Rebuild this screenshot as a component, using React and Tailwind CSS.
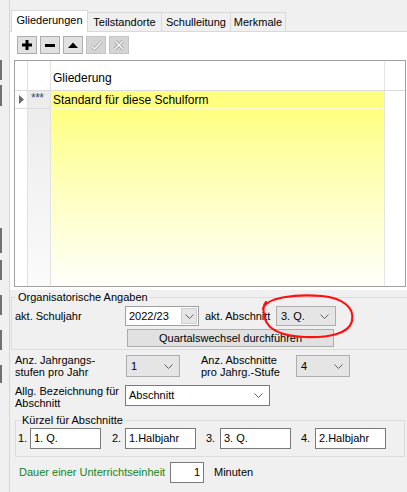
import React from 'react';

function Chevron() {
  return (
    <svg width="9" height="5" viewBox="0 0 9 5" className="shrink-0">
      <path d="M0.5 0.5L4.5 4.5L8.5 0.5" fill="none" stroke="#606060" strokeWidth="1" />
    </svg>
  );
}

function ListCombo({ value, className }) {
  return (
    <div className={`flex items-center justify-between pl-[4px] pr-[6px] bg-[#e5e5e5] border border-[#adadad] ${className}`}>
      <span>{value}</span>
      <Chevron />
    </div>
  );
}

function TextBox({ value, className }) {
  return (
    <div className={`h-[21px] flex items-center px-[3px] bg-white border border-[#7a7a7a] ${className}`}>
      {value}
    </div>
  );
}

function ToolButton({ children, disabled }) {
  return (
    <div
      className={`w-[20px] h-[18px] flex items-center justify-center border ${
        disabled ? 'bg-[#d4d4d4] border-[#c4c4c4]' : 'bg-[#e1e1e1] border-[#adadad]'
      }`}
    >
      {children}
    </div>
  );
}

const leftMarks = [
  'mt-[60px] h-[20px]',
  'mt-[5px] h-[21px]',
  'mt-[122px] h-[25px]',
  'mt-[7px] h-[20px]',
  'mt-[15px] h-[20px]',
  'mt-[15px] h-[20px]',
  'mt-[15px] h-[18px]',
];

export default function App() {
  return (
    <div className="relative w-[407px] h-[492px] flex overflow-hidden bg-[#f0f0f0] text-[11px] text-black font-['Liberation_Sans',Arial,sans-serif]">
      {/* clipped side panel */}
      <div className="w-[10px] shrink-0 flex flex-col border-r border-[#d6d6d6]">
        {leftMarks.map((c, i) => (
          <div key={i} className={`w-[2px] bg-[#707070] ${c}`} />
        ))}
      </div>

      <div className="flex-1 flex flex-col min-w-0">
        {/* Tabs */}
        <div className="h-[32px] shrink-0 flex items-end pl-px border-b border-[#d9d9d9]">
          <div className="w-[77px] h-[22px] -mb-px flex items-center justify-center pb-[2px] bg-white border border-b-0 border-[#d9d9d9]">
            Gliederungen
          </div>
          <div className="w-[74px] h-[19px] flex items-center justify-center border-t border-r border-[#d9d9d9]">
            Teilstandorte
          </div>
          <div className="w-[69px] h-[19px] flex items-center justify-center border-t border-r border-[#d9d9d9]">
            Schulleitung
          </div>
          <div className="w-[55px] h-[19px] flex items-center justify-center border-t border-r border-[#d9d9d9]">
            Merkmale
          </div>
        </div>

        {/* Tab page upper part */}
        <div className="bg-white pt-[4px] pb-[3px]">
          <div className="flex gap-[3px] pl-[7px]">
            <ToolButton>
              <svg width="10" height="10" viewBox="0 0 10 10">
                <rect x="0" y="3.5" width="10" height="3" fill="#000" />
                <rect x="3.5" y="0" width="3" height="10" fill="#000" />
              </svg>
            </ToolButton>
            <ToolButton>
              <svg width="10" height="3" viewBox="0 0 10 3">
                <rect x="0" y="0" width="10" height="3" fill="#000" />
              </svg>
            </ToolButton>
            <ToolButton>
              <svg width="10" height="6" viewBox="0 0 10 6">
                <polygon points="0,6 5,0.5 10,6" fill="#000" />
              </svg>
            </ToolButton>
            <ToolButton disabled>
              <svg width="13" height="11" viewBox="0 0 13 11">
                <path d="M1.5 6L4.5 9L11.5 1.5" fill="none" stroke="#a8a8a8" strokeWidth="3" strokeLinejoin="round" />
                <path d="M1.5 6L4.5 9L11.5 1.5" fill="none" stroke="#f8f8f8" strokeWidth="1.3" strokeLinejoin="round" />
              </svg>
            </ToolButton>
            <ToolButton disabled>
              <svg width="12" height="12" viewBox="0 0 12 12">
                <path d="M2 2L10 10M10 2L2 10" fill="none" stroke="#a8a8a8" strokeWidth="3.2" />
                <path d="M2 2L10 10M10 2L2 10" fill="none" stroke="#f8f8f8" strokeWidth="1.4" />
              </svg>
            </ToolButton>
          </div>

          {/* Grid */}
          <div className="mt-[6px] ml-[4px] mr-px h-[227px] flex flex-col border border-[#a0a0a0] bg-white overflow-hidden text-[12px]">
            <div className="h-[30px] shrink-0 flex border-b border-[#dcdcdc]">
              <div className="w-[13px] border-r border-[#e2e2e2]" />
              <div className="w-[23px] border-r border-[#e2e2e2]" />
              <div className="w-[334px] flex items-center pl-[2px] pt-[4px] border-r border-[#e6e6e6]">Gliederung</div>
              <div className="flex-1" />
            </div>
            <div className="flex-1 flex">
              <div className="w-[13px] flex flex-col border-r border-[#e2e2e2]">
                <div className="h-[18px] flex items-center pl-[4px] border-b border-[#dcdcdc]">
                  <svg width="5" height="9" viewBox="0 0 5 9">
                    <polygon points="0,0 5,4.5 0,9" fill="#6a6a6a" />
                  </svg>
                </div>
              </div>
              <div className="w-[23px] flex flex-col border-r border-[#e2e2e2] bg-gradient-to-b from-[#ebebeb] to-[#fbfbfb]">
                <div className="h-[18px] pl-[3px] pt-[1px] leading-[13px] text-[12px] tracking-[-0.5px] text-[#3d4d6e] border-b border-[#dcdcdc]">***</div>
              </div>
              <div className="w-[334px] flex flex-col border-r border-[#e6e6e6]">
                <div className="h-[18px] flex items-center pl-[2px] bg-[#ffff80] border-b border-[#ffffd0]">
                  Standard für diese Schulform
                </div>
                <div className="flex-1 bg-gradient-to-b from-[#ffff80] to-[#fffffa]" />
              </div>
              <div className="flex-1" />
            </div>
          </div>
        </div>

        {/* Lower panel */}
        <div className="flex-1 flex flex-col">
          <fieldset className="ml-px border-t border-l border-b border-[#dcdcdc] pb-[2px]">
            <legend className="ml-[4px] px-[2px] leading-[15px]">Organisatorische Angaben</legend>
            <div className="mt-px h-[20px] flex items-center pl-[3px]">
              <div className="w-[110px]">akt. Schuljahr</div>
              <div className="w-[74px] h-[20px] flex items-center justify-between pl-[3px] pr-px bg-white border border-[#a0a0a0]">
                <span>2022/23</span>
                <div className="w-[16px] h-[16px] flex items-center justify-center bg-[#e5e5e5] border border-[#cfcfcf]">
                  <Chevron />
                </div>
              </div>
              <div className="ml-[6px] w-[71px]">akt. Abschnitt</div>
              <ListCombo value="3. Q." className="w-[60px] h-[20px]" />
            </div>
            <div className="mt-[3px] flex pl-[3px]">
              <div className="w-[112px]" />
              <div className="w-[207px] h-[18px] flex items-center justify-center bg-[#e1e1e1] border border-[#adadad]">
                Quartalswechsel durchführen
              </div>
            </div>
          </fieldset>

          <div className="mt-[5px] h-[22px] flex items-center pl-[5px]">
            <div className="w-[111px] leading-[12px]">
              Anz. Jahrgangs-
              <br />
              stufen pro Jahr
            </div>
            <ListCombo value="1" className="w-[54px] h-[22px]" />
            <div className="ml-[21px] w-[95px] leading-[12px]">
              Anz. Abschnitte
              <br />
              pro Jahrg.-Stufe
            </div>
            <ListCombo value="4" className="w-[54px] h-[22px]" />
          </div>

          <div className="mt-[8px] flex items-start pl-[5px]">
            <div className="w-[110px] leading-[12px]">
              Allg. Bezeichnung für
              <br />
              Abschnitt
            </div>
            <div className="w-[145px] h-[21px] flex items-center justify-between pl-[3px] pr-[6px] bg-white border border-[#7a7a7a]">
              <span>Abschnitt</span>
              <Chevron />
            </div>
          </div>

          <fieldset className="mt-[4px] ml-[5px] mr-[2px] border border-[#dcdcdc] pb-[7px]">
            <legend className="ml-[5px] px-px leading-[15px]">Kürzel für Abschnitte</legend>
            <div className="h-[21px] flex items-center pl-[2px]">
              <div className="w-[12px]">1.</div>
              <TextBox value="1. Q." className="w-[71px]" />
              <div className="ml-[11px] w-[13px]">2.</div>
              <TextBox value="1.Halbjahr" className="w-[71px]" />
              <div className="ml-[10px] w-[14px]">3.</div>
              <TextBox value="3. Q." className="w-[71px]" />
              <div className="ml-[10px] w-[14px]">4.</div>
              <TextBox value="2.Halbjahr" className="w-[71px]" />
            </div>
          </fieldset>

          <div className="mt-[5px] h-[21px] flex items-center pl-[9px]">
            <div className="w-[151px] text-[#11861a]">Dauer einer Unterrichtseinheit</div>
            <TextBox value="1" className="w-[34px] justify-end" />
            <div className="ml-[10px]">Minuten</div>
          </div>
        </div>
      </div>

      {/* hand-drawn red marker over the screenshot */}
      <svg className="absolute inset-0 pointer-events-none" width="407" height="492" viewBox="0 0 407 492">
        <path
          d="M263 309C266 297 296 294 322 296C342 298 355 307 352 321C349 334 328 338 304 337C284 336 269 331 265 319C263 312 262 306 266 302"
          fill="none"
          stroke="#ff1010"
          strokeWidth="2.2"
          strokeLinecap="round"
        />
      </svg>
    </div>
  );
}
